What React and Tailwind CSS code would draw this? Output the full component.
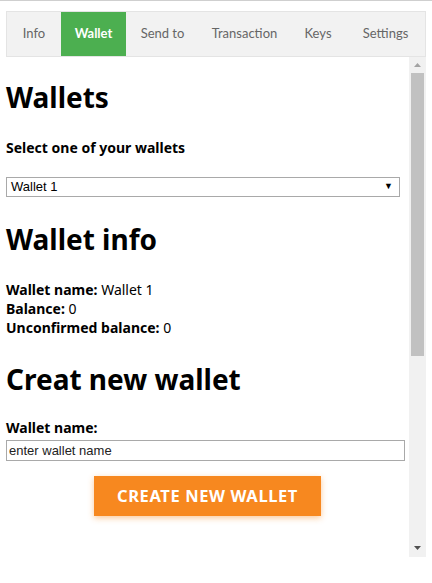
import React from "react";

const tabs = [
  ["Info", "w-[54px]"],
  ["Wallet", "w-[65px]"],
  ["Send to", "w-[73px]"],
  ["Transaction", "w-[91px]"],
  ["Keys", "w-[56px]"],
  ["Settings", "flex-1"],
];

export default function App() {
  const font = { fontFamily: '"Noto Sans", "Open Sans", sans-serif' };
  return (
    <div className="w-[432px] h-[583px] bg-white border-t border-[#cfcfcf] overflow-hidden" style={font}>
      <div className="ml-[6px] mt-[10px] w-[420px]">
        <div
          className="flex h-[46px] bg-[#f2f2f2] border border-[#e4e4e4] text-[13px] text-[#666]"
          style={{ fontFamily: 'Lato, "Noto Sans", sans-serif' }}
        >
          {tabs.map(([t, w]) => (
            <div
              key={t}
              className={
                "flex items-center justify-center whitespace-nowrap " +
                w +
                (t === "Wallet" ? " bg-[#4caf50] text-white font-bold" : "")
              }
            >
              {t}
            </div>
          ))}
        </div>
        <div className="flex h-[500px]">
          <div className="flex-1 text-black">
            <h1 className="mt-[23px] text-[28px] font-bold leading-[34px]">Wallets</h1>
            <h4 className="mt-[24px] text-[14px] font-bold leading-[20px]">Select one of your wallets</h4>
            <div
              className="mt-[19px] mr-[9px] h-[20px] border border-[#a9a9a9] flex items-center justify-between pl-[4px] pr-[6px] text-[13px]"
              style={{ fontFamily: '"Liberation Sans", Arial, sans-serif' }}
            >
              <span>Wallet 1</span>
              <span className="text-[9px]">▼</span>
            </div>
            <h1 className="mt-[25px] text-[28px] font-bold leading-[34px]">Wallet info</h1>
            <div className="mt-[24px] text-[14px] leading-[19px]">
              <div><b>Wallet name:</b> Wallet 1</div>
              <div><b>Balance:</b> 0</div>
              <div><b>Unconfirmed balance:</b> 0</div>
            </div>
            <h1 className="mt-[25px] text-[28px] font-bold leading-[34px]">Creat new wallet</h1>
            <div className="mt-[22px] text-[14px] leading-[19px] font-bold">Wallet name:</div>
            <div
              className="mt-[3px] mr-[4px] h-[21px] border border-[#a9a9a9] flex items-center pl-[2px] text-[13px] text-[#222]"
              style={{ fontFamily: '"Liberation Sans", Arial, sans-serif' }}
            >
              enter wallet name
            </div>
            <div className="flex justify-center mt-[15px]">
              <div className="w-[227px] h-[40px] bg-[#f7881f] text-white font-bold text-[16.5px] tracking-[0.6px] flex items-center justify-center shadow-[0_2px_6px_rgba(247,136,31,0.45)]">
                CREATE NEW WALLET
              </div>
            </div>
          </div>
          <div className="w-[17px] bg-[#f1f1f1] flex flex-col items-center">
            <div className="h-[16px] flex items-center justify-center">
              <svg width="7" height="4" viewBox="0 0 7 4"><path d="M0 4 L3.5 0 L7 4 Z" fill="#a3a3a3" /></svg>
            </div>
            <div className="w-[13px] h-[283px] bg-[#c1c1c1]" />
            <div className="flex-1" />
            <div className="h-[16px] flex items-center justify-center mb-[1px]">
              <svg width="7" height="4" viewBox="0 0 7 4"><path d="M0 0 L7 0 L3.5 4 Z" fill="#505050" /></svg>
            </div>
          </div>
        </div>
      </div>
    </div>
  );
}
